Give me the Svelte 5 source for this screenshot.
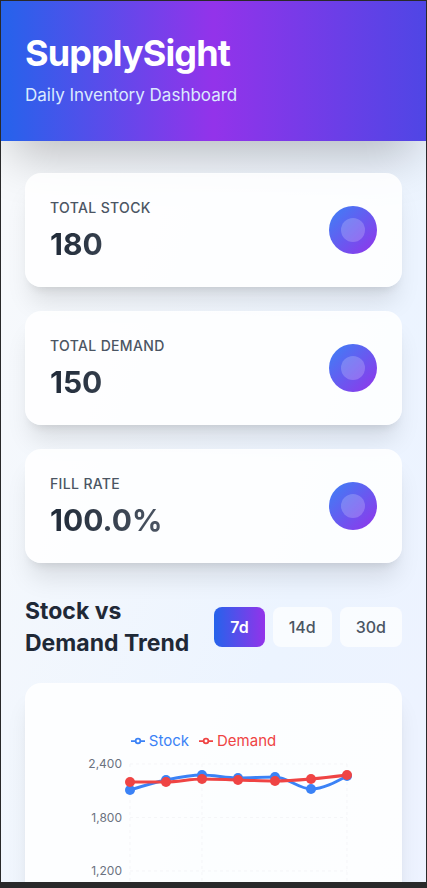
<script>
  const metrics = [
    { label: 'Total Stock', value: '180' },
    { label: 'Total Demand', value: '150' },
    { label: 'Fill Rate', value: '100.0%' }
  ];
  const ranges = ['7d', '14d', '30d'];
  let selected = $state('7d');

  const xs = [80, 116, 152, 188, 225, 261, 297];
  const series = [
    { name: 'Stock', color: '#3b82f6', ys: [82, 72, 67, 70, 69, 81, 68] },
    { name: 'Demand', color: '#ef4444', ys: [74, 74, 71, 72, 73, 71, 67] }
  ];
  const ticks = [
    { label: '2,400', y: 56 },
    { label: '1,800', y: 109.5 },
    { label: '1,200', y: 163 }
  ];
  const columns = [80, 152, 297];

  // Monotone cubic interpolation, so the curve never overshoots its points.
  function curve(ys) {
    const n = xs.length;
    const slope = [];
    for (let i = 0; i < n - 1; i++) slope.push((ys[i + 1] - ys[i]) / (xs[i + 1] - xs[i]));
    const t = new Array(n).fill(0);
    for (let i = 1; i < n - 1; i++) {
      const a = slope[i - 1];
      const b = slope[i];
      t[i] = (Math.sign(a) + Math.sign(b)) * Math.min(Math.abs(a), Math.abs(b), Math.abs(a + b) / 4) || 0;
    }
    t[0] = (3 * slope[0] - t[1]) / 2;
    t[n - 1] = (3 * slope[n - 2] - t[n - 2]) / 2;
    let d = `M${xs[0]},${ys[0]}`;
    for (let i = 0; i < n - 1; i++) {
      const h = (xs[i + 1] - xs[i]) / 3;
      d += `C${xs[i] + h},${ys[i] + h * t[i]} ${xs[i + 1] - h},${ys[i + 1] - h * t[i + 1]} ${xs[i + 1]},${ys[i + 1]}`;
    }
    return d;
  }
</script>

<div class="frame">
  <div class="page">
    <header>
      <h1>SupplySight</h1>
      <p>Daily Inventory Dashboard</p>
    </header>

    <main>
      <section class="metrics">
        {#each metrics as m}
          <article class="card metric">
            <div>
              <p class="label">{m.label}</p>
              <p class="value">{m.value}</p>
            </div>
            <div class="badge"><span></span></div>
          </article>
        {/each}
      </section>

      <section class="trend">
        <div class="bar">
          <h2>Stock vs Demand Trend</h2>
          <div class="ranges">
            {#each ranges as r}
              <button type="button" class:active={selected === r} aria-pressed={selected === r} onclick={() => (selected = r)}>{r}</button>
            {/each}
          </div>
        </div>

        <div class="card">
          <div class="chart">
            <ul class="legend">
              {#each series as s}
                <li style:color={s.color}>
                  <svg width="14" height="14" viewBox="0 0 32 32" aria-hidden="true">
                    <path d="M0,16h10.667A5.333,5.333,0,1,1,21.333,16H32M21.333,16A5.333,5.333,0,1,1,10.667,16" fill="none" stroke="currentColor" stroke-width="4" />
                  </svg>
                  {s.name}
                </li>
              {/each}
            </ul>
            <svg class="plot" viewBox="0 0 327 400" role="img" aria-label="Stock and demand over time">
              <g class="grid">
                {#each ticks as t}<line x1="80" x2="297" y1={t.y} y2={t.y} />{/each}
                {#each columns as x}<line x1={x} x2={x} y1="56" y2="270" />{/each}
              </g>
              {#each ticks as t}<text x="72" y={t.y + 4}>{t.label}</text>{/each}
              {#each series as s}
                <path d={curve(s.ys)} fill="none" stroke={s.color} stroke-width="3" />
                {#each s.ys as y, i}<circle cx={xs[i]} cy={y} r="5" fill={s.color} />{/each}
              {/each}
            </svg>
          </div>
        </div>
      </section>
    </main>
  </div>
</div>

<style>
  .frame {
    box-sizing: border-box;
    height: 100vh;
    border: 1px solid #29292a;
    border-bottom-width: 6px;
    overflow: hidden;
    font-family: Inter, 'Liberation Sans', sans-serif;
  }
  .page {
    min-height: 100%;
    background: linear-gradient(to bottom right, #f9fafb, #ecf4ff 60%, #eef2ff);
  }
  h1, h2, p, ul { margin: 0; padding: 0; }
  header {
    padding: 32px 24px;
    color: #fff;
    background: linear-gradient(to right, #2563eb, #9333ea, #4f46e5);
    box-shadow: 0 25px 50px -12px rgba(0, 0, 0, 0.25);
  }
  h1 {
    font-size: 36px;
    line-height: 40px;
    font-weight: 700;
    letter-spacing: -0.025em;
  }
  header p {
    margin-top: 8px;
    font-size: 17px;
    line-height: 28px;
    color: #dbeafe;
  }
  main {
    display: flex;
    flex-direction: column;
    gap: 32px;
    padding: 32px 24px;
  }
  .metrics, .trend {
    display: flex;
    flex-direction: column;
    gap: 24px;
  }
  .card {
    padding: 24px;
    border: 1px solid rgba(255, 255, 255, 0.2);
    border-radius: 16px;
    background: rgba(255, 255, 255, 0.85);
    box-shadow: 0 20px 25px -5px rgba(0, 0, 0, 0.1), 0 8px 10px -6px rgba(0, 0, 0, 0.1);
  }
  .metric {
    display: flex;
    align-items: center;
    justify-content: space-between;
  }
  .label {
    margin-bottom: 8px;
    font-size: 14px;
    line-height: 20px;
    font-weight: 500;
    letter-spacing: 0.025em;
    text-transform: uppercase;
    color: #4b5563;
  }
  .value {
    font-size: 30px;
    line-height: 36px;
    font-weight: 700;
    color: transparent;
    background: linear-gradient(to right, #1f2937, #4b5563);
    background-clip: text;
  }
  .badge {
    display: flex;
    align-items: center;
    justify-content: center;
    width: 48px;
    height: 48px;
    border-radius: 50%;
    background: linear-gradient(to bottom right, #3b82f6, #9333ea);
  }
  .badge span {
    width: 24px;
    height: 24px;
    border-radius: 50%;
    background: rgba(255, 255, 255, 0.2);
  }
  .bar {
    display: flex;
    align-items: center;
    justify-content: space-between;
  }
  h2 {
    font-size: 23px;
    line-height: 32px;
    font-weight: 700;
    color: #1f2937;
  }
  .ranges {
    display: flex;
    gap: 8px;
  }
  button {
    padding: 8px 16px;
    border: 0;
    border-radius: 8px;
    font: 500 16px/24px Inter, 'Liberation Sans', sans-serif;
    color: #4b5563;
    background: rgba(255, 255, 255, 0.7);
    cursor: pointer;
  }
  button.active {
    font-weight: 600;
    color: #fff;
    background: linear-gradient(to right, #2563eb, #9333ea);
  }
  .chart { display: grid; }
  .chart > * { grid-area: 1 / 1; }
  .legend {
    display: flex;
    justify-content: center;
    gap: 10px;
    padding: 21px 20px 0 0;
    list-style: none;
    font-size: 15px;
    line-height: 24px;
  }
  .legend li {
    display: flex;
    align-items: center;
    align-self: flex-start;
    gap: 4px;
  }
  .plot {
    display: block;
    width: 100%;
  }
  .grid line {
    stroke: #f3f4f6;
    stroke-dasharray: 3 3;
    stroke-opacity: 0.8;
  }
  .plot text {
    font-size: 12px;
    text-anchor: end;
    fill: #6b7280;
  }
</style>
